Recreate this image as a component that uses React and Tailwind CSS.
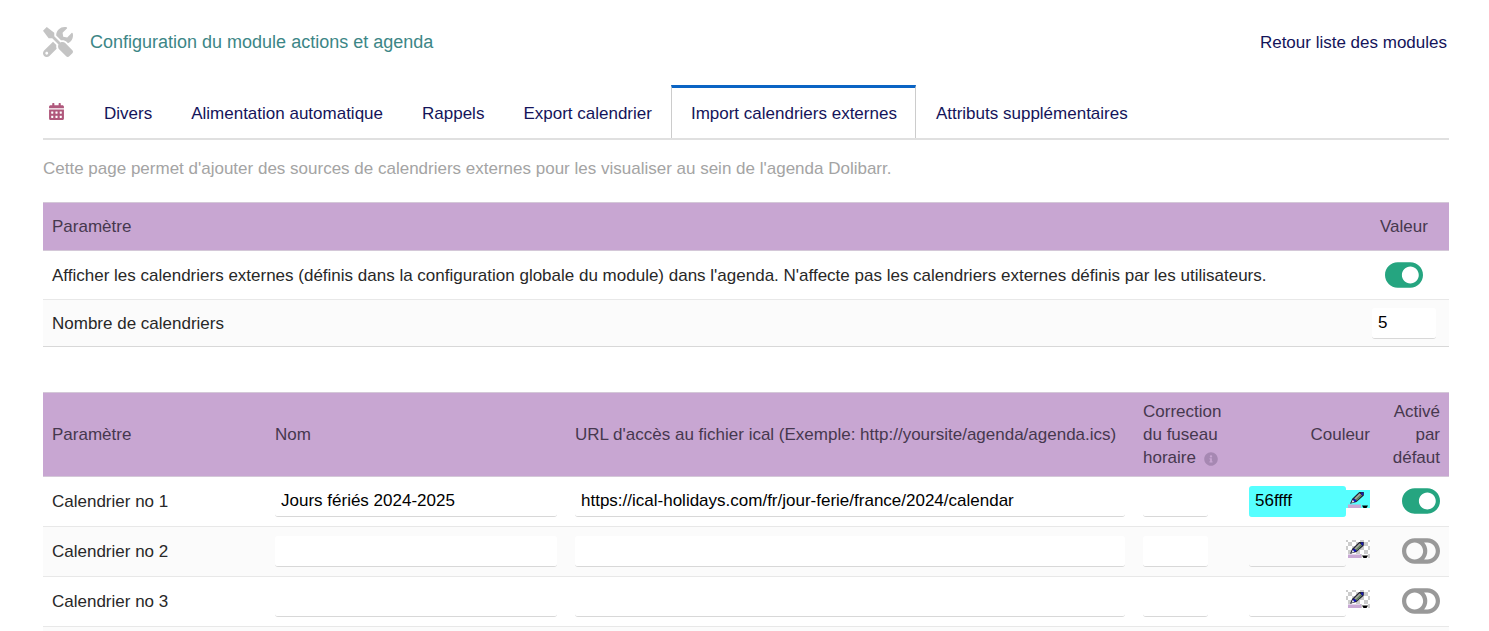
import React, { useState } from 'react';
import { FaTools, FaCalendarAlt, FaToggleOn, FaToggleOff, FaInfoCircle } from 'react-icons/fa';

const TABS = [
  'Divers',
  'Alimentation automatique',
  'Rappels',
  'Export calendrier',
  'Import calendriers externes',
  'Attributs supplémentaires',
];

const CALENDARS = [
  { id: 1, name: 'Jours fériés 2024-2025', url: 'https://ical-holidays.com/fr/jour-ferie/france/2024/calendar', color: '56ffff', enabled: true },
  { id: 2, name: '', url: '', color: '', enabled: false },
  { id: 3, name: '', url: '', color: '', enabled: false },
];

const inputClass = 'block h-[31px] rounded-[3px] border-b border-[#d8d8d8] bg-white px-1.5 text-black outline-none';

const Toggle = ({ label, defaultOn }) => {
  const [on, setOn] = useState(defaultOn);
  return (
    <label className="relative inline-flex h-[26px] w-[38px] cursor-pointer items-center justify-center align-middle">
      <input type="checkbox" className="sr-only" aria-label={label} checked={on} onChange={() => setOn(!on)} />
      {on ? (
        <FaToggleOn className="h-[34px] w-[38px] shrink-0 text-[#25a580]" />
      ) : (
        <FaToggleOff className="h-[34px] w-[38px] shrink-0 text-[#999999]" />
      )}
    </label>
  );
};

const PickerIcon = ({ color }) => (
  <svg width="24" height="18" viewBox="0 0 24 18">
    {color ? (
      <rect width="24" height="18" fill={`#${color}`} />
    ) : (
      <g>
        <rect width="24" height="18" fill="#ffffff" />
        <path
          fill="#cccccc"
          d="M0 0h2v2h-2zM6 0h4v2h-4zM14 0h4v2h-4zM22 0h2v2h-2zM2 2h4v4h-4zM10 2h4v4h-4zM18 2h4v4h-4zM0 6h2v4h-2zM6 6h4v4h-4zM14 6h4v4h-4zM22 6h2v4h-2zM2 10h4v4h-4zM10 10h4v4h-4zM18 10h4v4h-4zM14 14h2v4h-2zM22 14h2v4h-2z"
        />
      </g>
    )}
    <rect x="2" y="14.5" width="13" height="3.5" fill="#c8a8d4" />
    <path d="M4 13.8L6.2 8.8L13.2 2H17.8V5.4L10.5 12Z" fill="#20202c" />
    <path d="M8.2 8.4L13.6 3.2L16 5.2L10.8 10.4Z" fill="#a4a8a0" />
    <path d="M9.6 9.4L14.6 4.6L15.8 5.4L10.8 10.4Z" fill="#5c7c58" />
    <path d="M7.6 8.6L10.4 10.6L8.8 12L7.2 10.8Z" fill="#1010d0" />
    <path d="M5.4 12.8L6.8 9.8L8.4 12Z" fill="#e4e4f4" />
    <path d="M14.8 2.6H17.2V5L16 5.6Z" fill="#1818b8" />
    <path d="M16 15.5H22L20.5 18H17.5Z" fill="#000000" />
  </svg>
);

const App = () => {
  const [activeTab, setActiveTab] = useState('Import calendriers externes');

  return (
    <div className="flex min-h-screen flex-col bg-white pr-10 pl-[43px] font-['Liberation_Sans',Arial,sans-serif] text-[17px] leading-[23px] text-[#282828]">
      <header className="flex items-center justify-between pt-[27px] pb-[28px]">
        <div className="flex items-center gap-[17px]">
          <FaTools className="h-[30px] w-[30px] text-[#c4c4c4]" />
          <h1 className="text-[18px] text-[#3c8686]">Configuration du module actions et agenda</h1>
        </div>
        <a href="#modules" className="pr-0.5 text-[#14145a]">Retour liste des modules</a>
      </header>

      <nav className="flex h-[55px] border-b-2 border-[#e0e0e0]">
        <div className="flex w-[41px] items-center pl-[6px]">
          <FaCalendarAlt className="h-[17px] w-[15px] text-[#b0587c]" />
        </div>
        {TABS.map((tab) => (
          <a
            key={tab}
            href="#tab"
            onClick={() => setActiveTab(tab)}
            className={`flex items-center border-t-[3px] text-[#14145a] ${tab === activeTab ? 'border-x border-x-[#cccccc] border-t-[#0a64c4] pr-[18px] pl-[19px]' : 'border-t-transparent pr-[19px] pl-5'}`}
          >
            {tab}
          </a>
        ))}
      </nav>

      <p className="pt-[17px] pb-[22px] text-[#a4a4a4]">
        Cette page permet d'ajouter des sources de calendriers externes pour les visualiser au sein de l'agenda Dolibarr.
      </p>

      <table className="w-full border-collapse">
        <thead>
          <tr className="h-12 border-y border-[#d4c8d8] bg-[#c8a6d2] text-left text-[#46384e]">
            <th className="px-[9px] font-normal">Paramètre</th>
            <th className="w-[90px] text-center font-normal">Valeur</th>
          </tr>
        </thead>
        <tbody>
          <tr className="h-[49px] border-b border-[#e8e8e8]">
            <td className="px-[9px]">
              Afficher les calendriers externes (définis dans la configuration globale du module) dans l'agenda. N'affecte pas les calendriers externes définis par les utilisateurs.
            </td>
            <td className="text-center">
              <Toggle label="Afficher les calendriers externes" defaultOn />
            </td>
          </tr>
          <tr className="h-[47px] border-b border-[#d8d8d8] bg-[#fbfbfb]">
            <td className="px-[9px]">
              <label htmlFor="nb-calendars">Nombre de calendriers</label>
            </td>
            <td>
              <input id="nb-calendars" defaultValue="5" className={`${inputClass} mx-auto w-16`} />
            </td>
          </tr>
        </tbody>
      </table>

      <table className="mt-[45px] w-full table-fixed border-collapse">
        <colgroup>
          <col className="w-[223px]" />
          <col className="w-[300px]" />
          <col />
          <col className="w-[95px]" />
          <col className="w-[150px]" />
          <col className="w-[70px]" />
        </colgroup>
        <thead>
          <tr className="h-[84px] border-y border-[#d4c8d8] bg-[#c8a6d2] text-left text-[#46384e]">
            <th className="px-[9px] font-normal">Paramètre</th>
            <th className="px-[9px] font-normal">Nom</th>
            <th className="px-[9px] font-normal">URL d'accès au fichier ical (Exemple: http://yoursite/agenda/agenda.ics)</th>
            <th className="pl-[9px] font-normal">
              Correction du fuseau horaire
              <FaInfoCircle className="ml-2 inline h-[14px] w-[14px] text-[#a688b2]" />
            </th>
            <th className="px-[9px] text-right font-normal">Couleur</th>
            <th className="px-[9px] text-right font-normal">Activé par défaut</th>
          </tr>
        </thead>
        <tbody>
          {CALENDARS.map((cal) => (
            <tr key={cal.id} className="h-[50px] border-b border-[#e8e8e8] even:bg-[#fbfbfb]">
              <td className="px-[9px]">Calendrier no {cal.id}</td>
              <td className="px-[9px]">
                <input aria-label={`Nom ${cal.id}`} defaultValue={cal.name} className={`${inputClass} w-full`} />
              </td>
              <td className="px-[9px]">
                <input aria-label={`URL ${cal.id}`} defaultValue={cal.url} className={`${inputClass} w-full`} />
              </td>
              <td className="px-[9px]">
                <input aria-label={`Correction du fuseau horaire ${cal.id}`} className={`${inputClass} w-[65px]`} />
              </td>
              <td className="px-[9px]">
                <div className="flex items-center justify-end">
                  <input
                    aria-label={`Couleur ${cal.id}`}
                    defaultValue={cal.color}
                    className="block h-[31px] w-[97px] rounded-[3px] border-b border-[#d8d8d8] bg-transparent px-1.5 text-black outline-none"
                    style={cal.color ? { backgroundColor: `#${cal.color}`, borderColor: `#${cal.color}` } : undefined}
                  />
                  <button type="button" aria-label={`Choisir la couleur ${cal.id}`} className="mb-1.5">
                    <PickerIcon color={cal.color} />
                  </button>
                </div>
              </td>
              <td className="px-[9px] pb-0.5 text-right">
                <Toggle label={`Activé par défaut ${cal.id}`} defaultOn={cal.enabled} />
              </td>
            </tr>
          ))}
        </tbody>
      </table>
      <div className="flex-1 bg-[#fbfbfb]" />
    </div>
  );
};

export default App;
